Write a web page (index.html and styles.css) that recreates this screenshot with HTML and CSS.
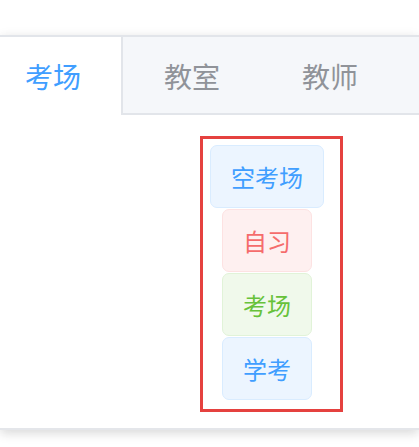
FILE: index.html
```html
<!DOCTYPE html>
<html lang="zh-CN">
<head>
    <meta charset="UTF-8">
    <meta name="viewport" content="width=device-width, initial-scale=1.0">
    <title>考场</title>
    <link rel="stylesheet" href="styles.css">
</head>
<body>

    <div class="tabs-card">
        <div class="tabs-header">
            <div class="tab-item active">考场</div>
            <div class="tab-item">教室</div>
            <div class="tab-item">教师</div>
        </div>

        <div class="tabs-content">
            <div class="tag-box">
                <div class="tag-list">
                    <span class="tag tag-primary">空考场</span>
                    <span class="tag tag-danger">自习</span>
                    <span class="tag tag-success">考场</span>
                    <span class="tag tag-primary">学考</span>
                </div>
            </div>
        </div>
    </div>

</body>
</html>
```

FILE: styles.css
```css
* {
    margin: 0;
    padding: 0;
    box-sizing: border-box;
    font-family: "Noto Sans CJK SC", "Noto Sans", sans-serif;
}

body {
    background-color: #fff;
    overflow: hidden;
    height: 447px;
}

.tabs-card {
    margin-top: 35px;
    height: 395px;
    background-color: #fff;
    border-top: 2px solid #e2e5ea;
    border-bottom: 2px solid #e4e6ea;
    box-shadow: 0 4px 10px rgba(0, 0, 0, 0.12), 0 0 12px rgba(0, 0, 0, 0.04);
}

.tabs-header {
    display: flex;
    height: 78px;
    background-color: #f5f7fa;
    border-bottom: 2px solid #e2e5ea;
}

.tab-item {
    padding: 2px 40px 0;
    font-size: 28px;
    line-height: 74px;
    color: #909399;
    border-left: 1px solid transparent;
    border-right: 1px solid transparent;
}

.tab-item.active {
    padding-left: 24px;
    color: #409eff;
    background-color: #fff;
    border-right: 2px solid #e2e5ea;
    height: 78px;
}

.tabs-content {
    padding: 21px 0 0 200px;
}

.tag-box {
    width: 143px;
    height: 276px;
    border: 3px solid #e5413f;
    padding: 6px 0 0 7px;
}

.tag-list {
    display: inline-flex;
    flex-direction: column;
    align-items: center;
    gap: 1px;
}

.tag {
    display: block;
    height: 63px;
    padding: 0 20px;
    font-size: 24px;
    line-height: 62px;
    border: 1px solid;
    border-radius: 7px;
}

.tag-primary {
    color: #409eff;
    background-color: #ecf5ff;
    border-color: #d9ecff;
}

.tag-danger {
    color: #f56c6c;
    background-color: #fef0f0;
    border-color: #fde2e2;
}

.tag-success {
    color: #67c23a;
    background-color: #f0f9eb;
    border-color: #e1f3d8;
}
```
